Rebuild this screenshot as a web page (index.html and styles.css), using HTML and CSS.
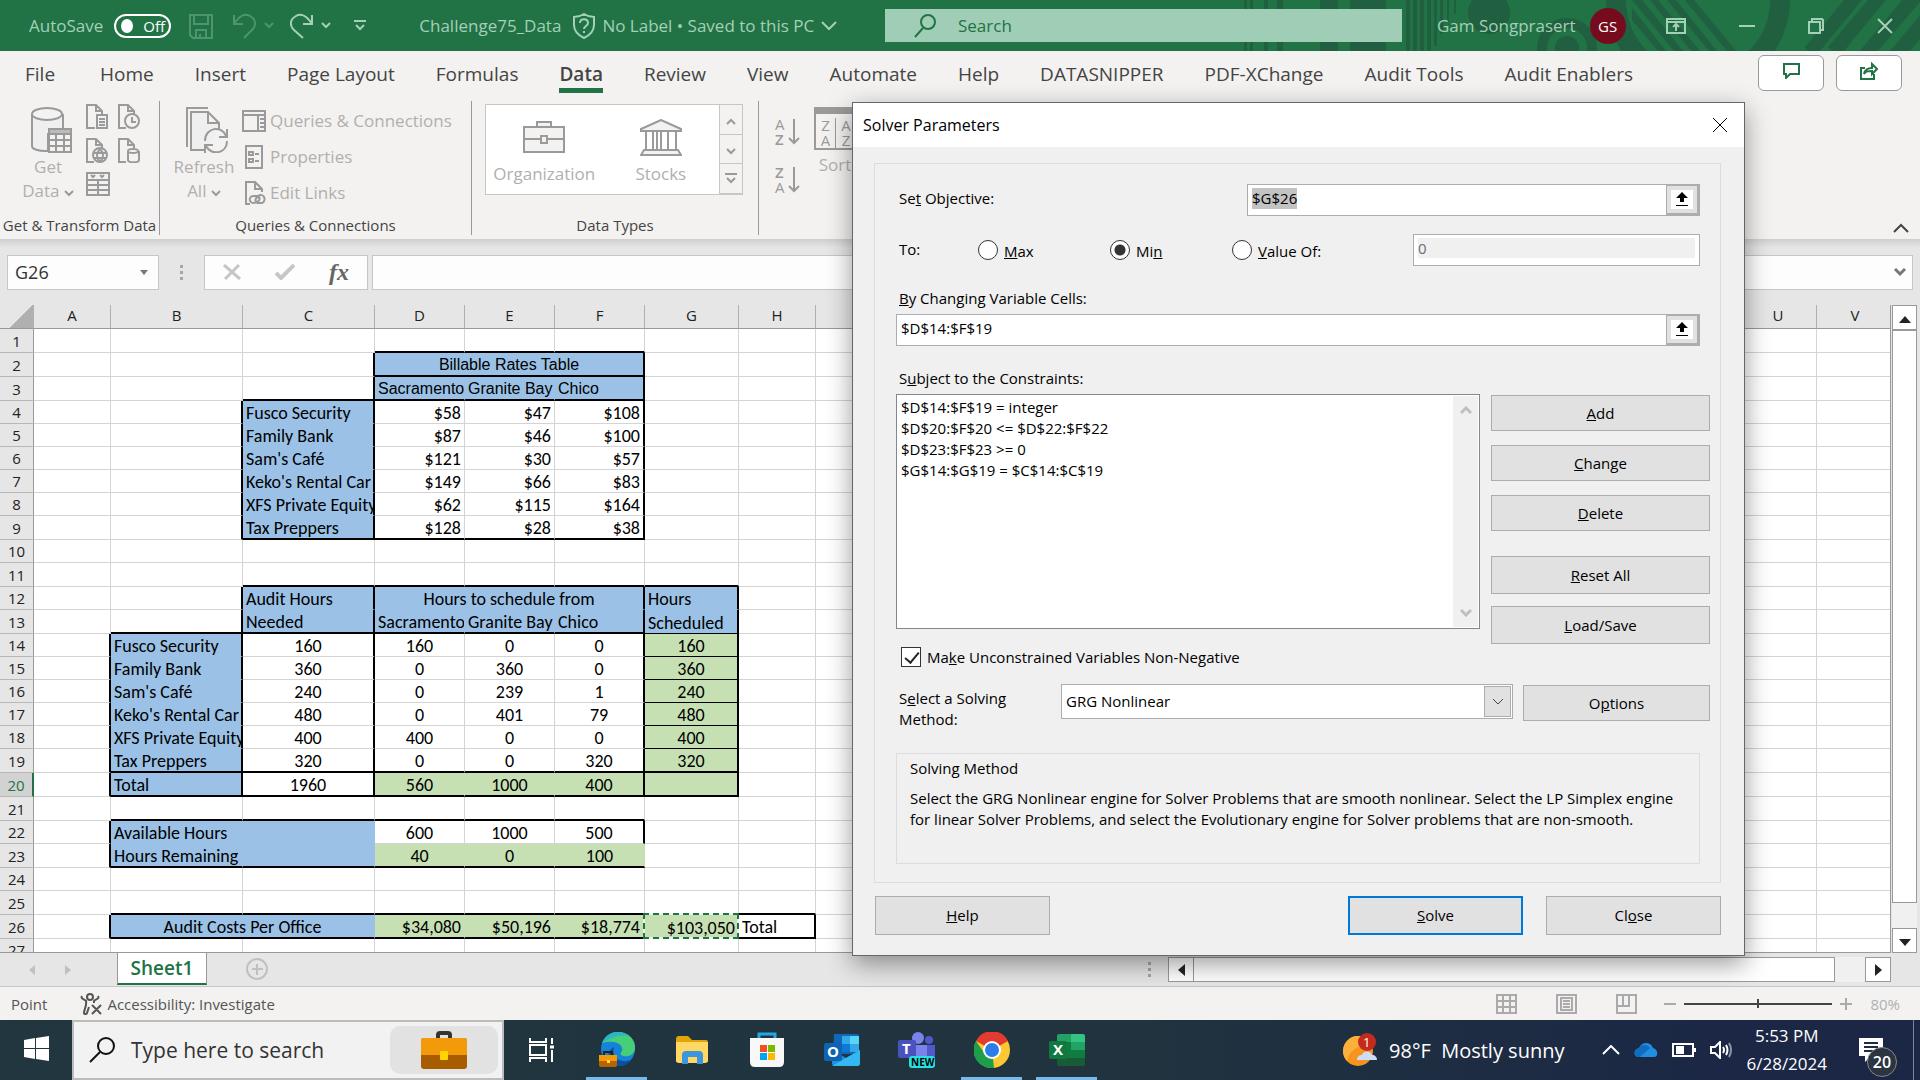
FILE: index.html
```html
<!DOCTYPE html>
<html lang="en">
<head>
  <meta charset="UTF-8" />
  <meta name="viewport" content="width=device-width, initial-scale=1.0"/>
  <title>Challenge75_Data - Excel</title>
  <link rel="stylesheet" href="styles.css">
</head>
<body>
  <div class="app">

    <!-- Title bar -->
    <header class="titlebar">
      <svg class="decor" width="680" height="51" viewBox="0 0 680 51" fill="#205f3f">
        <path d="M4 0h3v51h-3zM10 0h3v51h-3zM24 0h4v51h-4zM37 0h6v51h-6zM80 0h18v51h-18zM110 0h36v51h-36zM166 0h4v51h-4zM173 0h4v51h-4zM180 0h4v51h-4zM187 0h4v51h-4zM194 0h3v46h-3zM200 0h3v34h-3zM207 0h2v22h-2zM214 0h2v14h-2z"/>
        <circle cx="249" cy="13" r="21"/>
        <circle cx="327" cy="48" r="25" fill="none" stroke="#205f3f" stroke-width="10"/>
        <circle cx="327" cy="48" r="12"/>
        <circle cx="458" cy="0" r="82" fill="none" stroke="#205f3f" stroke-width="20"/>
        <path d="M392 8v12l26 31h8zM392 0l42 51h9L402 0zM410 0l41 51h9L418 0zM427 0l42 51h8L436 0zM445 0l42 51h9L454 0z"/>
        <path d="M565 47L604 0h18l-42 51h-12zM588 47L628 0h18l-42 51h-12zM620 51L662 0h18v2l-42 49zM650 51l30-36v24l-10 12z"/>
      </svg>
      <div class="tb-left">
        <span>AutoSave</span>
        <button class="toggle"><i></i>Off</button>
        <svg class="dim save" width="24" height="26" viewBox="0 0 24 26"><path d="M1 2h22v23H4l-3-3zM5 2v9h14V2M7 25v-8h10v8M11 25v-4"/></svg>
        <svg class="dim" width="42" height="26" viewBox="0 0 42 26"><path d="M2 2v9h9M2 11C7 3 13 0 18 3c7 4 6 10 2 14l-8 8M33 10l4 4 4-4"/></svg>
        <svg class="redo" width="42" height="26" viewBox="0 0 42 26"><path d="M22 2v9h-9M22 11C17 3 11 0 6 3c-7 4-6 10-2 14l9 8M32 10l4 4 4-4"/></svg>
        <svg class="more" width="12" height="12" viewBox="0 0 12 12"><path d="M0 1h12M2 5l4 4 4-4"/></svg>
        <span>Challenge75_Data</span>
        <svg class="shield" width="22" height="26" viewBox="0 0 22 26"><path d="M11 1c3 2 6 3 10 3v8c0 6-4 10-10 13C5 22 1 18 1 12V4c4 0 7-1 10-3zM7 10c0-5 8-5 8 0 0 3-4 3-4 6M11 18v2"/></svg>
        <span>No Label • Saved to this PC</span>
        <svg class="tb-caret" width="16" height="10" viewBox="0 0 16 10"><path d="M1 1l7 7 7-7"/></svg>
      </div>
      <div class="tb-search">
        <svg width="22" height="24" viewBox="0 0 22 24"><circle cx="14" cy="8" r="7"/><path d="M9 14l-8 9"/></svg>
        <input type="text" aria-label="Search" placeholder="Search">
      </div>
      <div class="tb-right">
        <span>Gam Songprasert</span>
        <span class="avatar">GS</span>
        <div class="win-controls">
          <svg width="20" height="16" viewBox="0 0 20 16"><path d="M1 1h18v14H1zM1 4h18M10 13V7M7 9l3-3 3 3"/></svg>
          <svg width="16" height="16" viewBox="0 0 16 16"><path d="M0 8h16"/></svg>
          <svg width="16" height="16" viewBox="0 0 16 16"><path d="M1 4h11v11H1zM4 3V1h10l1 1v10h-2"/></svg>
          <svg width="16" height="16" viewBox="0 0 16 16"><path d="M1 1l14 14M15 1L1 15"/></svg>
        </div>
      </div>
    </header>

    <!-- Ribbon -->
    <nav class="tabs">
      <a href="#" class="file">File</a>
      <a href="#">Home</a>
      <a href="#">Insert</a>
      <a href="#">Page Layout</a>
      <a href="#">Formulas</a>
      <a href="#" class="active">Data</a>
      <a href="#">Review</a>
      <a href="#">View</a>
      <a href="#">Automate</a>
      <a href="#">Help</a>
      <a href="#">DATASNIPPER</a>
      <a href="#">PDF-XChange</a>
      <a href="#">Audit Tools</a>
      <a href="#">Audit Enablers</a>
      <div class="tab-actions">
        <button aria-label="Comments"><svg width="17" height="16" viewBox="0 0 17 16"><path d="M1 1h15v10H7l-4 4v-4H1z"/></svg></button>
        <button aria-label="Share"><svg width="18" height="18" viewBox="0 0 18 18"><path d="M5 6H1v11h13v-5M4 12c1-5 4-6 8-6V2l5 5-5 5V9c-4 0-6 0-8 3z"/></svg></button>
      </div>
    </nav>

    <section class="ribbon">
      <div class="group g-get">
        <div class="group-body">
          <button class="big">
            <svg width="41" height="46" viewBox="0 0 41 46"><path fill="#efefef" d="M1 7v32c0 3 6 5 16 5V27h15V7"/><ellipse cx="16" cy="7" rx="15" ry="6" fill="#f3f2f1"/><path fill="#f3f2f1" d="M18 22h22v23H18zM18 27h22M18 33h22M18 39h22M25 27v18M33 27v18"/><path fill="#bbb" d="M18 22h22v5H18z"/></svg>
            <span>Get</span><span>Data <svg width="10" height="7" viewBox="0 0 10 7"><path d="M1 1l4 4 4-4"/></svg></span>
          </button>
          <div class="smalls">
            <svg width="22" height="25" viewBox="0 0 22 25"><path d="M9 24H1V1h9l6 6v4M10 1v6h6M11 11h10v13H11zM13 15h6M13 18h6M13 21h6"/></svg>
            <svg width="22" height="25" viewBox="0 0 22 25"><path d="M8 24H1V1h9l6 6v3M10 1v6h6M14 13v5h4"/><circle cx="14" cy="17" r="7"/></svg>
            <svg width="22" height="25" viewBox="0 0 22 25"><path d="M8 24H1V1h9l6 6v3M10 1v6h6M8 15h12M8 20h12M14 11c-4 4-4 9 0 13M14 11c4 4 4 9 0 13"/><circle cx="14" cy="17" r="7"/></svg>
            <svg width="22" height="25" viewBox="0 0 22 25"><path d="M8 24H1V1h9l6 6v3M10 1v6h6M10 13v9c0 3 11 3 11 0v-9"/><ellipse cx="15" cy="13" rx="5" ry="2"/></svg>
            <svg width="24" height="24" viewBox="0 0 24 24"><path d="M1 1h22v22H1zM1 8h22M1 13h22M1 18h22M12 8v15M5 3l2 2 2-2M14 3l2 2 2-2"/></svg>
          </div>
        </div>
        <div class="caption">Get &amp; Transform Data</div>
      </div>

      <div class="group g-queries">
        <div class="group-body">
          <button class="big">
            <svg width="42" height="46" viewBox="0 0 42 46"><path d="M1 40V1h21"/><path fill="#efefef" d="M18 43H5V5h17l11 11v7M22 5v11h11"/><path d="M19 34c0-14 17-16 21-5M41 22v8h-8M41 34c0 13-16 15-21 5M19 46v-8h8"/></svg>
            <span>Refresh</span><span>All <svg width="10" height="7" viewBox="0 0 10 7"><path d="M1 1l4 4 4-4"/></svg></span>
          </button>
          <div class="lines">
            <button><svg width="24" height="24" viewBox="0 0 24 24"><path d="M1 2h22v20H1zM1 6h22M16 6v16M18 10h4M18 14h4M18 18h4"/></svg>Queries &amp; Connections</button>
            <button><svg width="24" height="24" viewBox="0 0 24 24"><path d="M4 1h16v22H4zM7 7h4v3H7zM7 14h4v3H7zM13 9h4M13 16h4"/></svg>Properties</button>
            <button><svg width="24" height="24" viewBox="0 0 24 24"><path d="M8 23H4V1h9l7 7v3M13 1v7h7M15 21c-7 4-10-5-4-6h4c4 1 3 6-1 6M16 15c6-4 9 5 4 7h-4c-4-1-3-6 1-6"/></svg>Edit Links</button>
          </div>
        </div>
        <div class="caption">Queries &amp; Connections</div>
      </div>

      <div class="group g-types">
        <div class="group-body">
          <div class="gallery">
            <button><svg width="42" height="38" viewBox="0 0 42 38"><path fill="#f3f2f1" d="M1 8h40v25H1zM14 8V3h14v5M1 20h17M24 20h17M18 17h6v7h-6z"/></svg>Organization</button>
            <button><svg width="42" height="38" viewBox="0 0 42 38"><path fill="#f3f2f1" d="M1 12v-2L21 1l20 9v2zM6 12v19M13 12v19M17 12v19M21 12v19M28 12v19M36 12v19M4 31h34l3 5H1z"/></svg>Stocks</button>
            <div class="gallery-scroll">
              <button aria-label="Row up"><svg width="10" height="7" viewBox="0 0 10 7"><path d="M1 6l4-4 4 4"/></svg></button>
              <button aria-label="Row down"><svg width="10" height="7" viewBox="0 0 10 7"><path d="M1 1l4 4 4-4"/></svg></button>
              <button aria-label="More"><svg width="12" height="11" viewBox="0 0 12 11"><path d="M0 1h12M2 5l4 4 4-4"/></svg></button>
            </div>
          </div>
        </div>
        <div class="caption">Data Types</div>
      </div>

      <div class="group g-sort">
        <div class="group-body">
          <div class="az">
            <div class="az-row"><span>A<b>Z</b></span><svg width="12" height="26" viewBox="0 0 12 26"><path d="M6 0v24M1 19l5 5 5-5"/></svg></div>
            <div class="az-row"><span><b>Z</b>A</span><svg width="12" height="26" viewBox="0 0 12 26"><path d="M6 0v24M1 19l5 5 5-5"/></svg></div>
          </div>
          <button class="big sort">
            <span class="za-box"><i>Z</i><i>A</i><i>A</i><i>Z</i></span>
            <span>Sort</span>
          </button>
        </div>
      </div>
      <button class="collapse" aria-label="Collapse ribbon"><svg width="16" height="10" viewBox="0 0 16 10"><path d="M1 9l7-7 7 7"/></svg></button>
    </section>

    <!-- Formula bar -->
    <div class="formula-bar">
      <div class="name-box">
        <input type="text" value="G26" aria-label="Name box">
        <svg width="8" height="5" viewBox="0 0 8 5"><path d="M0 0h8L4 5z"/></svg>
      </div>
      <div class="dots"><i></i><i></i><i></i></div>
      <div class="fx-box">
        <svg width="18" height="16" viewBox="0 0 18 16"><path d="M1 1l16 14M16 1L2 15" stroke="#c6c6c6" stroke-width="3"/></svg>
        <svg width="20" height="16" viewBox="0 0 20 16"><path d="M1 9l5 5L19 1" stroke="#c6c6c6" stroke-width="4"/></svg>
        <span class="fx">fx</span>
      </div>
      <div class="formula-box">
        <input type="text" aria-label="Formula bar">
        <svg width="12" height="9" viewBox="0 0 12 9"><path d="M1 1l5 5 5-5" stroke="#777" stroke-width="3"/></svg>
      </div>
    </div>

    <!-- Worksheet -->
    <main class="sheet">
      <div class="grid-wrap"><table class="grid" id="grid"></table></div>
      <div class="vscroll">
        <button aria-label="Scroll up"><svg width="12" height="7" viewBox="0 0 12 7"><path d="M0 7h12L6 0z"/></svg></button>
        <div class="thumb"></div>
        <div class="track"></div>
        <button aria-label="Scroll down"><svg width="12" height="7" viewBox="0 0 12 7"><path d="M0 0h12L6 7z"/></svg></button>
      </div>
    </main>

    <div class="sheet-tabs">
      <svg class="nav" width="42" height="12" viewBox="0 0 42 12"><path d="M6 1v10L0 6zM36 1v10l6-5z"/></svg>
      <button class="sheet-tab">Sheet1</button>
      <button class="add-sheet" aria-label="New sheet"><svg width="23" height="23" viewBox="0 0 23 23"><circle cx="11" cy="11" r="10"/><path d="M11 6v11M6 11h11"/></svg></button>
      <div class="dots"><i></i><i></i><i></i></div>
      <div class="hscroll">
        <button aria-label="Scroll left"><svg width="7" height="12" viewBox="0 0 7 12"><path d="M7 0v12L0 6z"/></svg></button>
        <div class="thumb"></div>
        <div class="track"></div>
        <button aria-label="Scroll right"><svg width="7" height="12" viewBox="0 0 7 12"><path d="M0 0v12l7-6z"/></svg></button>
      </div>
    </div>

    <footer class="status">
      <span>Point</span>
      <span class="access"><svg width="23" height="22" viewBox="0 0 23 22"><circle cx="10" cy="4" r="3"/><path d="M2 3c-2 3 4 4 4 5 1 5-2 8-2 12 0 2 3 1 3 0l2-6M18 3c2 3-4 4-4 5v2M12 12l9 9M21 12l-9 9"/></svg>Accessibility: Investigate</span>
      <div class="views">
        <svg width="21" height="20" viewBox="0 0 21 20"><path d="M1 1h19v18H1zM1 7h19M1 13h19M7 1v18M14 1v18"/></svg>
        <svg width="21" height="20" viewBox="0 0 21 20"><path d="M1 1h19v18H1zM5 4h11v12H5zM7 7h7M7 10h7M7 13h7"/></svg>
        <svg width="21" height="20" viewBox="0 0 21 20"><path d="M1 1h19v18H1zM1 12h12V1M7 1v11"/></svg>
      </div>
      <div class="zoom">
        <svg width="12" height="12" viewBox="0 0 12 12"><path d="M0 6h12"/></svg>
        <input type="range" min="0" max="100" value="50" aria-label="Zoom">
        <svg width="12" height="12" viewBox="0 0 12 12"><path d="M0 6h12M6 0v12"/></svg>
        <span>80%</span>
      </div>
    </footer>

    <!-- Windows taskbar -->
    <div class="taskbar">
      <button class="start" aria-label="Start"><svg width="25" height="25" viewBox="0 0 25 25" fill="#fff"><path d="M0 4l11-2v10H0zM12 2l13-2v12H12zM0 13h11v10L0 21zM12 13h13v12l-13-2z"/></svg></button>
      <div class="task-search">
        <svg width="26" height="26" viewBox="0 0 26 26"><circle cx="17" cy="9" r="8"/><path d="M11 15L1 25"/></svg>
        <input type="text" aria-label="Type here to search" placeholder="Type here to search">
        <div class="pill"><svg width="46" height="38" viewBox="0 0 46 38"><path d="M17 8V4q0-2 2-2h8q2 0 2 2v4" fill="none" stroke="#333" stroke-width="4"/><rect y="7" width="46" height="31" rx="3" fill="#a85c00"/><path d="M0 24V10q0-3 3-3h40q3 0 3 3v14z" fill="#f39a0b"/><rect x="19" y="20" width="8" height="9" rx="1" fill="#ffd400"/></svg></div>
      </div>
      <div class="task-icons">
        <button aria-label="Task view"><svg width="26" height="24" viewBox="0 0 26 24" fill="none" stroke="#fff" stroke-width="2"><path d="M1 0v4h16V0M1 24v-4h16v4M1 7h16v10H1zM23 0v6M23 12v12"/><path d="M21 9h4" stroke-width="3"/></svg></button>
        <button class="running" aria-label="Edge"><svg width="38" height="38" viewBox="0 0 38 38"><circle cx="20" cy="18" r="17" fill="#1583d8"/><path d="M4 12C8 3 15 1 20 1c11 0 18 8 17 17-1 6-6 8-12 7-3-1-3-3-1-5 2-6-6-12-20-8z" fill="#45cf79"/><path d="M4 12C8 3 15 1 20 1c4 0 8 1 11 4-9-2-17 1-27 7z" fill="#2bb5c7"/><path d="M16 16c-3 10 5 17 17 13-4 6-12 8-20 4-4-7-3-14 3-17z" fill="#0b4f9e"/><rect x="1" y="24" width="18" height="12" rx="2" fill="#b86200"/><path d="M1 24h18v6H1z" fill="#f39a0b"/><path d="M6 24v-3h8v3" fill="none" stroke="#222" stroke-width="2"/><path d="M9 29h3v3H9z" fill="#ffe14a"/></svg></button>
        <button aria-label="File Explorer"><svg width="34" height="30" viewBox="0 0 34 30"><path d="M1 4q0-3 3-3h9l4 4h14q2 0 2 2v20H1z" fill="#e2a40b"/><path d="M1 7h32v18q0 3-3 3H4q-3 0-3-3z" fill="#ffd765"/><path d="M7 29v-9q0-4 4-4h13q4 0 4 4v9h-6v-7h-9v7z" fill="#3b96dd"/></svg></button>
        <button aria-label="Microsoft Store"><svg width="36" height="36" viewBox="0 0 36 36"><path d="M10 9V2h16v7" fill="none" stroke="#22a7e8" stroke-width="3"/><path d="M1 6h34v24q0 5-5 5H6q-5 0-5-5z" fill="#f8f8f8"/><path d="M11 13h7v7h-7z" fill="#f04e23"/><path d="M19 13h7v7h-7z" fill="#7db700"/><path d="M11 21h7v7h-7z" fill="#00a3ee"/><path d="M19 21h7v7h-7z" fill="#ffb800"/></svg></button>
        <button aria-label="Outlook"><svg width="36" height="32" viewBox="0 0 36 32"><path d="M10 0h23q2 0 2 2v18H9z" fill="#1066b8"/><path d="M18 2h8v8h-8z" fill="#32a9e7"/><path d="M26 2h9v8h-9z" fill="#58d3fb"/><path d="M18 10h8v8h-8z" fill="#0f78d4"/><path d="M26 10h9v8h-9z" fill="#32a9e7"/><path d="M8 16l14 8 14-8v13q0 3-3 3H11q-3 0-3-3z" fill="#1e93e0"/><path d="M8 32l28-16v13q0 3-3 3z" fill="#35b8f1"/><rect y="9" width="18" height="18" rx="2" fill="#0f63b5"/><text x="3" y="23" class="app-letter">O</text></svg></button>
        <button aria-label="Teams"><svg width="38" height="36" viewBox="0 0 38 36"><circle cx="20" cy="6" r="6" fill="#7b83eb"/><circle cx="31" cy="8" r="4" fill="#5059c9"/><path d="M12 13h17v21H12z" fill="#7b83eb"/><path d="M29 13h8v13h-8z" fill="#5059c9"/><rect x="0" y="8" width="18" height="18" rx="2" fill="#4a52bd"/><text x="4" y="22" class="app-letter">T</text><rect x="11" y="24" width="26" height="12" rx="3" fill="#27e0e0"/><text x="13" y="34" class="new">NEW</text></svg></button>
        <button class="running" aria-label="Chrome"><svg width="36" height="36" viewBox="0 0 36 36"><circle cx="18" cy="18" r="18" fill="#fcc934"/><path d="M18 18L2 9A18 18 0 0 1 34 9z" fill="#e33b2e"/><path d="M18 18l2 18A18 18 0 0 1 2 9l9 13z" fill="#1e9e4a"/><circle cx="18" cy="18" r="9" fill="#fff"/><circle cx="18" cy="18" r="7" fill="#2b7de9"/></svg></button>
        <button class="running" aria-label="Excel"><svg width="36" height="32" viewBox="0 0 36 32"><path d="M10 0h13v8H8V2q0-2 2-2z" fill="#21a366"/><path d="M22 0h12q2 0 2 2v6H22z" fill="#33c481"/><path d="M8 8h14v16H8z" fill="#107c41"/><path d="M22 8h14v8H22z" fill="#21a366"/><path d="M22 16h14v8H22z" fill="#107c41"/><path d="M8 24h28v6q0 2-2 2H10q-2 0-2-2z" fill="#185c37"/><rect y="7" width="18" height="18" rx="2" fill="#10793f"/><text x="4" y="21" class="app-letter">X</text></svg></button>
      </div>
      <div class="tray">
        <span class="weather">
          <svg width="36" height="34" viewBox="0 0 36 34"><circle cx="15" cy="18" r="15" fill="#f5941f"/><path d="M15 3a15 15 0 0 0-15 15c0 4 2 8 4 10C6 18 14 12 28 11A15 15 0 0 0 15 3z" fill="#fbb03b"/><circle cx="24" cy="9" r="9" fill="#c42b1c"/><path d="M14 27c0-4 3-5 5-5 2-5 9-4 10 0 3 0 5 2 5 5H14z" fill="#cfdcf7"/><text x="20" y="14" class="badge-one">1</text></svg>
          98°F&nbsp; Mostly sunny
        </span>
        <svg class="up" width="18" height="10" viewBox="0 0 18 10"><path d="M1 9l8-8 8 8"/></svg>
        <svg width="24" height="16" viewBox="0 0 24 16"><path d="M5 15c-6 0-6-8 0-9 3-7 12-6 14 0 5 1 6 9 1 9z" fill="#1f8fe0"/><path d="M5 15c-6 0-6-8 0-9 2-4 8-4 11 0L6 15z" fill="#0f6cc0"/></svg>
        <svg class="battery" width="24" height="14" viewBox="0 0 24 14"><path d="M1 1h20v12H1zM23 5v4"/><path d="M4 3h8v8H4z" fill="#fff" stroke="none"/></svg>
        <svg class="battery" width="22" height="18" viewBox="0 0 22 18"><path d="M1 6h4l5-5v16l-5-5H1zM13 6q2 3 0 6M16 4q3 5 0 10"/><path d="M19 2q4 7 0 14" opacity=".5"/></svg>
        <div class="clock"><span>5:53 PM</span><span>6/28/2024</span></div>
        <div class="notify">
          <svg width="24" height="24" viewBox="0 0 24 24"><path d="M0 0h24v18H12l-6 6v-6H0z" fill="#fff"/><path d="M5 5h14M5 9h14M5 13h9" stroke="#1e2d42" stroke-width="2"/></svg>
          <span>20</span>
        </div>
        <div class="peek"></div>
      </div>
    </div>
  </div>

  <!-- Solver dialog -->
  <form class="dialog" onsubmit="return false">
    <div class="dialog-title">
      <h1>Solver Parameters</h1>
      <button type="button" aria-label="Close dialog"><svg width="16" height="16" viewBox="0 0 16 16"><path d="M1 1l14 14M15 1L1 15"/></svg></button>
    </div>
    <div class="panel">
      <div class="row objective">
        <label for="objective">Se<u>t</u> Objective:</label>
        <div class="ref-input">
          <input type="text" id="objective" value="$G$26">
          <button type="button" aria-label="Pick objective cell"><svg width="22" height="19" viewBox="0 0 22 19"><path d="M0 0h22v19H0z" fill="#fff"/><path d="M9 12V8H5l6-6 6 6h-4v4zM5 15h12v1H5z"/></svg></button>
        </div>
      </div>
      <div class="row to-row">
        <span class="to">To:</span>
        <label class="opt max"><input type="radio" name="goal"><span><u>M</u>ax</span></label>
        <label class="opt min"><input type="radio" name="goal" checked><span>Mi<u>n</u></span></label>
        <label class="opt value"><input type="radio" name="goal"><span><u>V</u>alue Of:</span></label>
        <input type="text" class="value-of" value="0" aria-label="Value" disabled>
      </div>
      <label class="block-label" for="variables"><u>B</u>y Changing Variable Cells:</label>
      <div class="ref-input wide">
        <input type="text" id="variables" value="$D$14:$F$19">
        <button type="button" aria-label="Pick variable cells"><svg width="22" height="19" viewBox="0 0 22 19"><path d="M0 0h22v19H0z" fill="#fff"/><path d="M9 12V8H5l6-6 6 6h-4v4zM5 15h12v1H5z"/></svg></button>
      </div>
      <div class="block-label" id="constraints-label">S<u>u</u>bject to the Constraints:</div>
      <div class="constraints">
        <div class="listbox" role="listbox" aria-labelledby="constraints-label">
          <ul>
            <li>$D$14:$F$19 = integer</li>
            <li>$D$20:$F$20 &lt;= $D$22:$F$22</li>
            <li>$D$23:$F$23 &gt;= 0</li>
            <li>$G$14:$G$19 = $C$14:$C$19</li>
          </ul>
          <div class="list-scroll">
            <svg width="12" height="9" viewBox="0 0 12 9"><path d="M1 7l5-5 5 5"/></svg>
            <svg width="12" height="9" viewBox="0 0 12 9"><path d="M1 2l5 5 5-5"/></svg>
          </div>
        </div>
        <div class="side-buttons">
          <button type="button"><span><u>A</u>dd</span></button>
          <button type="button"><span><u>C</u>hange</span></button>
          <button type="button"><span><u>D</u>elete</span></button>
          <button type="button" class="reset"><span><u>R</u>eset All</span></button>
          <button type="button" class="load"><span><u>L</u>oad/Save</span></button>
        </div>
      </div>
      <label class="check"><input type="checkbox" checked><span>Ma<u>k</u>e Unconstrained Variables Non-Negative</span></label>
      <div class="method">
        <label for="method">S<u>e</u>lect a Solving Method:</label>
        <div class="select">
          <select id="method">
            <option>GRG Nonlinear</option>
            <option>Simplex LP</option>
            <option>Evolutionary</option>
          </select>
          <span class="arrow"><svg width="12" height="8" viewBox="0 0 12 8"><path d="M1 1l5 5 5-5"/></svg></span>
        </div>
        <button type="button"><span>O<u>p</u>tions</span></button>
      </div>
      <div class="groupbox">
        <h2>Solving Method</h2>
        <p>Select the GRG Nonlinear engine for Solver Problems that are smooth nonlinear. Select the LP Simplex engine for linear Solver Problems, and select the Evolutionary engine for Solver problems that are non-smooth.</p>
      </div>
    </div>
    <div class="dialog-footer">
      <button type="button"><span><u>H</u>elp</span></button>
      <button type="button" class="primary"><span><u>S</u>olve</span></button>
      <button type="button"><span>Cl<u>o</u>se</span></button>
    </div>
  </form>

  <script src="sheet.js"></script>
</body>
</html>
```
FILE: styles.css
```css
:root {
  --green: #217346;
  --ribbon-bg: #f3f2f1;
  --chrome-bg: #e6e6e6;
  --cell-blue: #9bc2e6;
  --cell-green: #c6e0b4;
  --line: #d4d4d4;
  --disabled: #b1afad;
  --icon-grey: #9a9a9a;
  --ui-font: "Segoe UI", "Open Sans", sans-serif;
  --cell-font: Calibri, Carlito, Lato, sans-serif;
}
* { box-sizing: border-box; }
body {
  margin: 0;
  font-family: var(--ui-font);
  font-size: 15px;
  color: #000;
  overflow: hidden;
}
button, input, select { font: inherit; color: inherit; border-radius: 0; }
button { background: none; border: none; padding: 0; }
input { min-width: 0; outline: none; }
svg { flex: none; }
.app {
  display: flex;
  flex-direction: column;
  height: 100vh;
}

/* title bar */
.titlebar {
  position: relative;
  display: grid;
  grid-template-columns: 885fr 517fr 518fr;
  align-items: center;
  height: 51px;
  background: var(--green);
  color: #a3d0b6;
  font-size: 17px;
  white-space: nowrap;
}
.titlebar svg { fill: none; stroke: #a3d0b6; stroke-width: 2; }
.titlebar .decor {
  position: absolute;
  right: 0;
  top: 0;
  fill: #205f3f;
  stroke: none;
}
.tb-left { display: flex; align-items: center; padding-left: 29px; }
.titlebar .dim { stroke: #4d9470; }
.toggle {
  display: flex;
  align-items: center;
  gap: 10px;
  width: 57px;
  height: 24px;
  margin-left: 11px;
  padding-left: 5px;
  border: 2px solid #fff;
  border-radius: 12px;
  color: #fff;
  font-size: 15px;
}
.toggle i { width: 12px; height: 14px; border-radius: 50%; background: #fff; }
.tb-left .save { margin: 0 19px 0 18px; }
.tb-left .redo { margin: 0 22px 0 16px; }
.tb-left .more { margin-right: 53px; }
.tb-left .shield { margin: 0 7px 0 12px; }
.tb-left .tb-caret { margin-left: 7px; }
.tb-search {
  position: relative;
  display: flex;
  align-items: center;
  gap: 20px;
  height: 33px;
  padding-left: 29px;
  background: #a0cdb5;
}
.tb-search svg { stroke: var(--green); }
.tb-search input { flex: 1; border: none; background: none; color: var(--green); }
.tb-search input::placeholder { color: var(--green); }
.tb-right {
  position: relative;
  display: flex;
  align-items: center;
  padding: 0 27px 0 35px;
}
.avatar {
  width: 36px;
  height: 36px;
  margin-left: 14px;
  border-radius: 50%;
  background: #750b1c;
  color: #fff;
  font-size: 15px;
  line-height: 36px;
  text-align: center;
}
.win-controls { display: flex; gap: 53px; margin-left: auto; }

/* ribbon tabs */
.tabs {
  display: flex;
  align-items: stretch;
  gap: 41px;
  height: 44px;
  padding: 0 18px 0 25px;
  background: var(--ribbon-bg);
  white-space: nowrap;
}
.tabs a {
  height: 42px;
  font-size: 19px;
  line-height: 46px;
  color: #444;
  text-decoration: none;
}
.tabs .file { margin-right: 4px; }
.tabs a.active { font-weight: 600; border-bottom: 5px solid var(--green); }
.tab-actions { display: flex; gap: 12px; margin: 4px 0 0 auto; }
.tab-actions button {
  width: 66px;
  height: 36px;
  border: 1px solid #999;
  border-radius: 6px;
  background: #fff;
}
.tab-actions svg { fill: none; stroke: var(--green); stroke-width: 2; }

/* ribbon */
.ribbon {
  display: flex;
  height: 144px;
  padding-top: 6px;
  background: var(--ribbon-bg);
  color: var(--disabled);
  font-size: 17px;
  line-height: 24px;
}
.ribbon svg { fill: none; stroke: var(--icon-grey); stroke-width: 2; }
.group {
  display: flex;
  flex-direction: column;
  height: 134px;
  border-right: 1px solid #999;
}
.g-get { width: 160px; }
.g-queries { width: 312px; }
.g-types { width: 287px; }
.g-sort { border: none; }
.group-body { display: flex; flex: 1; }
.caption {
  height: 20px;
  color: #444;
  font-size: 15px;
  line-height: 20px;
  text-align: center;
  white-space: nowrap;
}
.big {
  display: flex;
  flex-direction: column;
  align-items: center;
  width: 76px;
  margin-left: 10px;
  padding-top: 6px;
}
.big > svg { margin: 0 0 2px 6px; }
.smalls {
  display: grid;
  grid-template-columns: 22px 22px;
  grid-auto-rows: 24px;
  gap: 10px;
  margin-top: 3px;
}
.g-queries .big { margin-left: 6px; }
.lines { display: flex; flex-direction: column; gap: 12px; margin-top: 8px; }
.lines button { display: flex; align-items: center; gap: 4px; }
.gallery {
  display: flex;
  width: 258px;
  height: 91px;
  margin: 3px 0 0 13px;
  border: 1px solid #c8c6c4;
  background: #fff;
}
.gallery > button {
  display: flex;
  flex-direction: column;
  align-items: center;
  gap: 5px;
  width: 117px;
  padding-top: 14px;
}
.gallery-scroll {
  display: flex;
  flex-direction: column;
  width: 23px;
  margin-left: auto;
  border-left: 1px solid #c8c6c4;
  background: var(--ribbon-bg);
}
.gallery-scroll button { flex: 1; border-bottom: 1px solid #c8c6c4; line-height: 10px; }
.az { display: flex; flex-direction: column; gap: 16px; margin: 15px 0 0 16px; }
.az-row {
  display: flex;
  align-items: center;
  gap: 2px;
  height: 32px;
  color: var(--icon-grey);
  font-size: 15px;
  line-height: 15px;
}
.az-row span { display: flex; flex-direction: column; width: 11px; }
.az-row b { font-weight: 600; }
.big.sort { width: 42px; margin-left: 14px; }
.za-box {
  display: grid;
  grid-template-columns: 20px 20px;
  width: 42px;
  height: 43px;
  margin-bottom: 3px;
  padding-top: 4px;
  border: 2px solid var(--icon-grey);
  border-top-width: 7px;
  color: var(--icon-grey);
  font-size: 15px;
  line-height: 15px;
}
.za-box i { font-style: normal; }
.za-box i:nth-child(odd) { border-right: 1px solid var(--icon-grey); }
.collapse { align-self: flex-end; margin: 0 11px 0 auto; }
.ribbon .collapse svg { stroke: #444; }

/* formula bar */
.formula-bar {
  display: flex;
  align-items: center;
  height: 66px;
  padding: 0 7px;
  background: linear-gradient(#cfcfcf, var(--chrome-bg) 9px);
}
.name-box, .fx-box, .formula-box {
  display: flex;
  align-items: center;
  height: 35px;
  border: 1px solid #c6c6c6;
  background: #fdfdfd;
}
.name-box { width: 152px; padding: 0 10px 0 5px; }
.name-box input { flex: 1; border: none; background: none; font-size: 18px; color: #333; }
.name-box svg { fill: #777; }
.dots { display: flex; flex-direction: column; gap: 3px; width: 45px; align-items: center; }
.dots i { width: 3px; height: 3px; background: #a6a6a6; }
.fx-box { width: 164px; justify-content: space-between; padding: 0 18px; fill: none; }
.fx { font: italic bold 24px "Liberation Serif", serif; color: #666; }
.formula-box { flex: 1; margin-left: 4px; padding: 0 6px; fill: none; }
.formula-box input { flex: 1; border: none; background: none; }

/* worksheet */
.sheet {
  display: flex;
  flex: 1;
  min-height: 0;
  padding-right: 3px;
  background: var(--chrome-bg);
}
.grid-wrap {
  flex: 1;
  min-width: 0;
  overflow: hidden;
  border-right: 1px solid #999;
  border-bottom: 1px solid #999;
}
.grid {
  table-layout: fixed;
  width: 1894px;
  border-collapse: separate;
  border-spacing: 0;
  background: #fff;
  font-family: var(--cell-font);
  font-size: 18px;
}
.grid th {
  padding: 0;
  background: var(--chrome-bg);
  border-right: 1px solid #b0b0b0;
  border-bottom: 1px solid #999;
  color: #222;
  font: 15px/22px var(--ui-font);
}
.grid thead th { line-height: 20px; vertical-align: top; }
.grid tbody th { border-right-color: #999; border-bottom-color: #b8b8b8; }
.grid tbody th.current {
  background: #d2d2d2;
  border-right: 2px solid var(--green);
  color: var(--green);
}
.grid thead th:first-child {
  background: linear-gradient(135deg, var(--chrome-bg) 58%, #b0b0b0 58%);
}
.grid thead tr { height: 24px; }
.grid tr { height: 23px; }
.grid tr.tall { height: 24px; }
.grid td {
  padding: 0 3px;
  border-right: 1px solid var(--line);
  border-bottom: 1px solid var(--line);
  line-height: 20px;
  overflow: hidden;
  white-space: nowrap;
  vertical-align: bottom;
}
.grid .blue { background: var(--cell-blue); border-color: var(--cell-blue); }
.grid .green { background: var(--cell-green); border-color: var(--cell-green); }
.grid .arial { font-family: Arial, "Liberation Sans", sans-serif; font-size: 16px; }
.grid .num { text-align: right; }
.grid .mid { text-align: center; }
.grid .thin { border-bottom-color: #000; }
.grid .edge-r { border-right: 2px solid #000; }
.grid .edge-b { border-bottom: 2px solid #000; }
.grid .picked { position: relative; overflow: visible; }
.picked::before, .picked::after {
  content: "";
  position: absolute;
  inset: -2px -1px -1px -2px;
  border: 2px solid #e9f3e9;
}
.picked::after { border: 2px dashed var(--green); }

.vscroll { display: flex; flex-direction: column; width: 25px; margin-left: 1px; }
.vscroll button, .hscroll button { border: 1px solid #999; background: #fff; }
.vscroll button { height: 25px; line-height: 10px; }
.vscroll svg, .hscroll svg { fill: #222; }
.thumb { border: 1px solid #999; background: #fff; }
.vscroll .thumb { flex: 1; }
.vscroll .track { height: 25px; background: #f0f0f0; }

.sheet-tabs {
  display: flex;
  align-items: center;
  height: 34px;
  padding-right: 29px;
  background: var(--chrome-bg);
  border-bottom: 1px solid #c6c6c6;
}
.sheet-tabs .nav { margin: 0 46px 0 29px; fill: #c0c0c0; }
.sheet-tab {
  align-self: flex-start;
  width: 90px;
  height: 32px;
  background: #fff;
  border: solid #999;
  border-width: 0 1px;
  border-bottom: 2px solid var(--green);
  color: var(--green);
  font-size: 19px;
  font-weight: 600;
  line-height: 28px;
}
.add-sheet { margin-left: 39px; height: 23px; }
.add-sheet svg { fill: none; stroke: #c0c0c0; stroke-width: 2; }
.sheet-tabs .dots { width: 38px; margin-left: auto; }
.hscroll { display: flex; width: 723px; height: 25px; }
.hscroll button { width: 26px; }
.hscroll .thumb { flex: 1; border-left: none; }
.hscroll .track { width: 30px; background: #f0f0f0; }

.status {
  display: flex;
  align-items: center;
  height: 33px;
  padding: 0 20px 0 11px;
  background: var(--ribbon-bg);
  color: #555;
}
.status svg { fill: none; stroke: #aaa; stroke-width: 2; }
.access { display: flex; align-items: center; gap: 4px; margin-left: 33px; }
.status .access svg { stroke: #555; }
.views { display: flex; gap: 39px; margin: 0 27px 0 auto; }
.zoom { display: flex; align-items: center; gap: 8px; color: #b0b0b0; }
.zoom span { margin-left: 10px; }
.zoom input {
  appearance: none;
  width: 148px;
  height: 13px;
  margin: 0;
  background: linear-gradient(#444, #444) center / 100% 2px no-repeat;
}
.zoom input::-webkit-slider-thumb { appearance: none; width: 2px; height: 9px; background: #444; }

/* taskbar */
.taskbar {
  display: flex;
  height: 60px;
  background: linear-gradient(90deg, #21363f 0%, #20333f 60%, #1b2745 90%);
  color: #fff;
}
.start { width: 72px; }
.task-search {
  display: flex;
  align-items: center;
  width: 432px;
  padding: 0 4px 0 15px;
  border: 2px solid #bcbcbc;
  background: #f2f2f2;
}
.task-search > svg { fill: none; stroke: #111; stroke-width: 2; }
.task-search input {
  flex: 1;
  padding: 0 0 0 16px;
  border: none;
  background: none;
  font-size: 21px;
}
.task-search input::placeholder { color: #333; }
.pill {
  display: flex;
  align-items: center;
  justify-content: center;
  width: 108px;
  height: 48px;
  border-radius: 10px;
  background: #e2e2e2;
}
.task-icons { display: flex; }
.task-icons button {
  position: relative;
  display: flex;
  align-items: center;
  justify-content: center;
  width: 75px;
}
.running::after {
  content: "";
  position: absolute;
  left: 7px;
  right: 7px;
  bottom: 0;
  height: 3px;
  background: #76b9ed;
}
.app-letter { fill: #fff; font-size: 15px; font-weight: 700; }
.new { fill: #000; font-size: 10px; font-weight: 700; }
.badge-one { fill: #fff; font-size: 13px; }
.tray {
  display: flex;
  align-items: center;
  gap: 14px;
  margin-left: auto;
  white-space: nowrap;
}
.tray .up, .battery { fill: none; stroke: #fff; stroke-width: 2; }
.weather { display: flex; align-items: center; gap: 10px; margin-right: 24px; font-size: 20px; }
.clock {
  display: flex;
  flex-direction: column;
  align-items: center;
  font-size: 17px;
  line-height: 28px;
}
.notify { position: relative; width: 40px; height: 24px; margin-left: 18px; }
.notify span {
  position: absolute;
  left: 8px;
  top: 9px;
  width: 30px;
  height: 30px;
  border: 1px solid #888;
  border-radius: 50%;
  background: #2b3440;
  font-size: 16px;
  font-weight: 600;
  line-height: 28px;
  text-align: center;
}
.peek { align-self: stretch; width: 7px; border-left: 1px solid #7b8794; }

/* solver dialog */
.dialog {
  position: absolute;
  left: 852px;
  top: 102px;
  width: 893px;
  border: 1px solid #666;
  background: #f0f0f0;
  box-shadow: 0 8px 24px rgba(0, 0, 0, 0.4);
  line-height: 21px;
}
.dialog-title {
  display: flex;
  justify-content: space-between;
  align-items: center;
  height: 44px;
  padding: 0 16px 0 10px;
  background: #fff;
}
.dialog-title h1 { margin: 0; font-size: 16px; font-weight: 400; }
.dialog-title svg { display: block; stroke: #000; }
.panel {
  margin: 16px 23px 0 21px;
  padding: 20px 10px 18px 21px;
  border: 1px solid #dcdcdc;
}
.row { display: flex; align-items: center; margin-right: 10px; height: 32px; }
.objective label { flex: 1; padding-left: 3px; margin-top: -3px; }
.ref-input {
  display: flex;
  width: 453px;
  height: 32px;
  border: 1px solid #abadb3;
  background: #fff;
}
.ref-input.wide { width: auto; margin-right: 10px; }
.ref-input input {
  flex: 1;
  height: 21px;
  margin-top: 3px;
  padding: 0 4px;
  border: none;
  background: none;
}
.ref-input input::selection { background: #c3c3c3; color: #000; }
.ref-input button {
  width: 33px;
  border: 1px solid #adadad;
  border-right-width: 2px;
  border-bottom-width: 2px;
  background: #e1e1e1;
}
.ref-input svg { display: block; margin: auto; }
.to-row { margin-top: 18px; }
.to { width: 82px; padding: 0 0 2px 3px; }
.opt { display: flex; align-items: center; gap: 6px; }
.opt span { padding-top: 2px; }
.max { width: 132px; }
.min { width: 122px; }
.value { width: 181px; }
.opt input {
  appearance: none;
  width: 20px;
  height: 20px;
  margin: 0;
  border: 1px solid #333;
  border-radius: 50%;
  background: #fff;
}
.opt input:checked { background: radial-gradient(circle, #333 5px, #fff 6px); }
.value-of {
  flex: 1;
  height: 32px;
  padding: 3px 4px 7px;
  border: 1px solid #abadb3;
  background: linear-gradient(#f0f0f0, #f0f0f0) content-box, #fff;
  color: #6d6d6d;
}
.block-label { display: block; margin: 22px 0 5px; padding-left: 3px; }
.constraints { display: flex; gap: 11px; }
.listbox {
  display: flex;
  flex: 1;
  height: 235px;
  padding: 1px;
  border: 1px solid #828790;
  background: #fff;
}
.listbox ul { flex: 1; margin: 1px 0 0; padding: 0 3px; list-style: none; }
.list-scroll {
  display: flex;
  flex-direction: column;
  justify-content: space-between;
  align-items: center;
  width: 25px;
  padding: 10px 0;
  background: #f0f0f0;
}
.list-scroll svg { fill: none; stroke: #bfbfbf; stroke-width: 3; }
.side-buttons { display: flex; flex-direction: column; gap: 14px; width: 219px; padding-top: 1px; }
.side-buttons button, .method button, .dialog-footer button {
  border: 1px solid #adadad;
  background: #e1e1e1;
}
.side-buttons button { height: 36px; }
.side-buttons .reset { height: 38px; margin-top: 11px; }
.side-buttons .load { height: 38px; margin-top: -2px; }
.check { display: flex; align-items: center; gap: 6px; margin: 2px 0 0 5px; }
.check span { padding-top: 1px; }
.check input {
  appearance: none;
  position: relative;
  width: 20px;
  height: 20px;
  margin: 0;
  border: 1px solid #333;
  background: #fff;
}
.check input:checked::after {
  content: "";
  position: absolute;
  left: 6px;
  top: 1px;
  width: 6px;
  height: 12px;
  border: solid #222;
  border-width: 0 2px 2px 0;
  transform: rotate(40deg);
}
.method { display: flex; align-items: flex-start; height: 46px; margin-top: 16px; }
.method label { width: 165px; padding: 4px 40px 0 3px; }
.select { position: relative; flex: 1; height: 35px; }
.select select {
  appearance: none;
  width: 100%;
  height: 100%;
  padding: 0 4px;
  border: 1px solid #abadb3;
  background: #fff;
}
.arrow {
  position: absolute;
  right: 2px;
  top: 2px;
  bottom: 2px;
  display: flex;
  align-items: center;
  justify-content: center;
  width: 27px;
  border: 1px solid #adadad;
  background: #e1e1e1;
  pointer-events: none;
}
.arrow svg { fill: none; stroke: #444; }
.method button { width: 187px; height: 36px; margin: 1px 0 0 10px; }
.groupbox {
  height: 111px;
  margin: 23px 10px 0 0;
  padding: 4px 13px;
  border: 1px solid #dcdcdc;
}
.groupbox h2 { margin: 0 0 9px; font-size: 15px; font-weight: 400; }
.groupbox p { margin: 0; }
.dialog-footer { display: flex; gap: 23px; padding: 13px 23px 20px 22px; }
.dialog-footer button { width: 175px; height: 39px; }
.dialog-footer .primary { margin-left: auto; border: 2px solid #0078d7; }
```
FILE: sheet.js
```js
const rates = [
  ['Fusco Security', 58, 47, 108],
  ['Family Bank', 87, 46, 100],
  ["Sam's Café", 121, 30, 57],
  ["Keko's Rental Car", 149, 66, 83],
  ['XFS Private Equity', 62, 115, 164],
  ['Tax Preppers', 128, 28, 38]
];
const hours = [
  [160, 160, 0, 0],
  [360, 0, 360, 0],
  [240, 0, 239, 1],
  [480, 0, 401, 79],
  [400, 400, 0, 0],
  [320, 0, 0, 320]
];

const cells = {};
function put(ref, text, cls, span) {
  cells[ref] = { text: text, cls: cls || '', span: span || 1 };
}
// adds a border class to a list of cells, creating blanks where needed
function mark(refs, cls) {
  refs.split(' ').forEach(ref => {
    if (!cells[ref]) put(ref, '');
    cells[ref].cls += ' ' + cls;
  });
}

// billable rates
put('D2', 'Billable Rates Table', 'blue arial mid', 3);
put('D3', 'Sacramento', 'blue arial');
put('E3', 'Granite Bay', 'blue arial');
put('F3', 'Chico', 'blue arial');
rates.forEach((r, i) => {
  const n = i + 4;
  put('C' + n, r[0], 'blue');
  put('D' + n, '$' + r[1], 'num');
  put('E' + n, '$' + r[2], 'num');
  put('F' + n, '$' + r[3], 'num');
  mark(`B${n} C${n} F${n}`, 'edge-r');
});
mark('C2 D2 C3 F3', 'edge-r');
mark('D1 E1 F1 D2 C3 D3 E3 F3 C9 D9 E9 F9', 'edge-b');

// schedule
put('C12', 'Audit Hours', 'blue');
put('C13', 'Needed', 'blue');
put('D12', 'Hours to schedule from', 'blue mid', 3);
put('D13', 'Sacramento', 'blue');
put('E13', 'Granite Bay', 'blue');
put('F13', 'Chico', 'blue');
put('G12', 'Hours', 'blue');
put('G13', 'Scheduled', 'blue thin');
hours.forEach((h, i) => {
  const n = i + 14;
  put('B' + n, rates[i][0], 'blue');
  put('C' + n, h[0], 'mid');
  put('D' + n, h[1], 'mid');
  put('E' + n, h[2], 'mid');
  put('F' + n, h[3], 'mid');
  put('G' + n, h[0], 'green mid thin');
  mark(`A${n} B${n} C${n} F${n} G${n}`, 'edge-r');
});
put('B20', 'Total', 'blue');
put('C20', 1960, 'mid');
put('D20', 560, 'green mid');
put('E20', 1000, 'green mid');
put('F20', 400, 'green mid');
put('G20', '', 'green');
mark('B12 C12 D12 G12 B13 C13 F13 G13 A20 B20 C20 F20 G20', 'edge-r');
mark('C11 D11 E11 F11 G11 B13 C13 D13 E13 F13', 'edge-b');
mark('B19 C19 D19 E19 F19 G19 B20 C20 D20 E20 F20 G20', 'edge-b');

// available hours
put('B22', 'Available Hours', 'blue');
put('C22', '', 'blue');
put('D22', 600, 'mid');
put('E22', 1000, 'mid');
put('F22', 500, 'mid');
put('B23', 'Hours Remaining', 'blue');
put('C23', '', 'blue');
put('D23', 40, 'green mid');
put('E23', 0, 'green mid');
put('F23', 100, 'green mid');
mark('A22 F22 A23', 'edge-r');
mark('B21 C21 D21 E21 F21 B23 C23 D23 E23 F23', 'edge-b');

// costs
put('B26', 'Audit Costs Per Office', 'blue mid', 2);
put('D26', '$34,080', 'green num');
put('E26', '$50,196', 'green num');
put('F26', '$18,774', 'green num');
put('G26', '$103,050', 'green num picked');
put('H26', 'Total');
mark('A26 F26 H26', 'edge-r');
mark('B25 C25 D25 E25 F25 G25 H25 B26 D26 E26 F26 H26', 'edge-b');

const letters = 'ABCDEFGHIJKLMNOPQRSTUV'.split('');
const widths = { A: 77, B: 132, C: 132, D: 90, E: 90, F: 90, G: 94 };
const tallRows = [1, 2, 3, 9, 11, 13, 19, 20, 21, 23, 25, 26];

let html = '<colgroup><col style="width:34px">';
letters.forEach(l => html += `<col style="width:${widths[l] || 77}px">`);
html += '</colgroup><thead><tr><th></th>';
letters.forEach(l => html += `<th>${l}</th>`);
html += '</tr></thead><tbody>';
for (let n = 1; n <= 27; n++) {
  html += `<tr class="${tallRows.includes(n) ? 'tall' : ''}"><th class="${n === 20 ? 'current' : ''}">${n}</th>`;
  for (let c = 0; c < letters.length; c++) {
    const cell = cells[letters[c] + n];
    if (!cell) {
      html += '<td></td>';
      continue;
    }
    html += `<td class="${cell.cls.trim()}" colspan="${cell.span}">${cell.text}</td>`;
    c += cell.span - 1;
  }
  html += '</tr>';
}
document.getElementById('grid').innerHTML = html + '</tbody>';

const objective = document.getElementById('objective');
objective.focus();
objective.select();
```
